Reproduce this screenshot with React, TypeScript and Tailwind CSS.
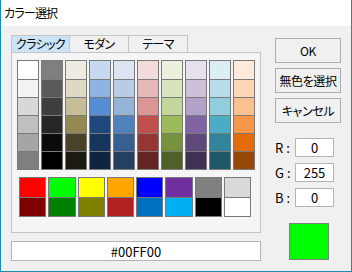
import React from "react";

const paletteColumns: string[][] = [
  ["#ffffff", "#f2f2f2", "#d8d8d8", "#bfbfbf", "#a5a5a5", "#7f7f7f"],
  ["#7f7f7f", "#595959", "#3f3f3f", "#262626", "#0c0c0c", "#000000"],
  ["#eeece1", "#ddd9c3", "#c4bd97", "#938953", "#494429", "#1d1b10"],
  ["#c6d9f0", "#8db3e2", "#548dd4", "#1f497d", "#17365d", "#0f243e"],
  ["#dbe5f1", "#b8cce4", "#95b3d7", "#4f81bd", "#366092", "#244061"],
  ["#f2dcdb", "#e5b9b7", "#d99694", "#c0504d", "#953734", "#632423"],
  ["#ebf1dd", "#d7e3bc", "#c3d69b", "#9bbb59", "#76923c", "#4f6128"],
  ["#e5e0ec", "#ccc1d9", "#b2a2c7", "#8064a2", "#5f497a", "#3f3151"],
  ["#dbeef3", "#b7dde8", "#92cddc", "#4bacc6", "#31859b", "#205867"],
  ["#fdeada", "#fbd5b5", "#fac08f", "#f79646", "#e36c09", "#974806"],
];

const basicColors: [string, string][] = [
  ["#ff0000", "#800000"],
  ["#00ff00", "#008000"],
  ["#ffff00", "#808000"],
  ["#ffa500", "#b22222"],
  ["#0000ff", "#0070c0"],
  ["#7030a0", "#00b0f0"],
  ["#808080", "#000000"],
  ["#d9d9d9", "#ffffff"],
];

const tabs = ["クラシック", "モダン", "テーマ"];

const rgb = [
  { label: "R", value: "0" },
  { label: "G", value: "255" },
  { label: "B", value: "0" },
];

export default function App() {
  return (
    <div
      className="flex h-[272px] w-[352px] flex-col border-x border-b border-[#1c8dab] bg-[#f0f0f0] text-[12px] text-black [font-feature-settings:'palt']"
      style={{ fontFamily: '"Noto Sans CJK JP", "Noto Sans", sans-serif' }}
    >
      {/* タイトルバー */}
      <div className="flex h-[26px] shrink-0 items-center bg-white pl-[3px] text-[12px] tracking-[-0.8px]">
        カラー選択
      </div>

      <div className="flex pl-[10px]">
        {/* 左側: タブ + パレット */}
        <div className="mt-[9px] flex w-[250px] flex-col">
          <div className="flex h-[17px]">
            {tabs.map((t, i) => (
              <div
                key={t}
                className={`flex w-[59px] items-center justify-center border-t border-r border-[#c4c4c4] leading-none tracking-[-0.6px] ${
                  i === 0 ? "border-l bg-[#cce4f7]" : ""
                }`}
              >
                {t}
              </div>
            ))}
          </div>

          <div className="flex h-[181px] flex-col border border-[#c4c4c4] bg-[#f5f5f5] pt-[7px]">
            <div className="flex gap-[2px] pl-[5px]">
              {paletteColumns.map((col, ci) => (
                <div key={ci} className="flex w-[22px] flex-col border border-[#7a7a7a]">
                  {col.map((c, ri) => (
                    <div
                      key={ri}
                      className={`h-[18px] ${ri > 0 ? "border-t border-[#7a7a7a]" : ""}`}
                      style={{ backgroundColor: c }}
                    />
                  ))}
                </div>
              ))}
            </div>

            <div className="mt-[7px] grid grid-cols-8 gap-[2px] pl-[7px] pr-[9px]">
              {basicColors.map(([top, bottom], i) => (
                <div key={i} className="flex flex-col border border-[#7a7a7a]">
                  <div className="h-[19px]" style={{ backgroundColor: top }} />
                  <div className="h-[19px] border-t border-[#7a7a7a]" style={{ backgroundColor: bottom }} />
                </div>
              ))}
            </div>
          </div>

          <div className="mt-[8px] flex h-[20px] items-center justify-center border border-[#b4b4b4] bg-white text-[13px] leading-none">
            #00FF00
          </div>
        </div>

        {/* 右側: ボタン + RGB */}
        <div className="ml-[14px] mt-[12px] flex w-[66px] flex-col">
          <div className="flex flex-col gap-[5px]">
            {["OK", "無色を選択", "キャンセル"].map((b) => (
              <button
                key={b}
                type="button"
                className="flex h-[25px] items-center justify-center border border-[#adadad] bg-[#f0f0f0] leading-none tracking-[-0.4px]"
              >
                {b}
              </button>
            ))}
          </div>

          <div className="mt-[15px] flex flex-col gap-[6px]">
            {rgb.map((r) => (
              <div key={r.label} className="flex h-[19px] items-center">
                <span className="flex w-[20px] gap-[3px] text-[13px] leading-none">
                  <span>{r.label}</span>
                  <span>:</span>
                </span>
                <div className="flex h-[19px] w-[39px] items-center justify-center border border-[#b4b4b4] bg-white text-[13px] leading-none">
                  {r.value}
                </div>
              </div>
            ))}
          </div>

          <div className="ml-[14px] mt-[16px] h-[37px] w-[40px] border border-[#808080] bg-[#00ff00]" />
        </div>
      </div>
    </div>
  );
}
